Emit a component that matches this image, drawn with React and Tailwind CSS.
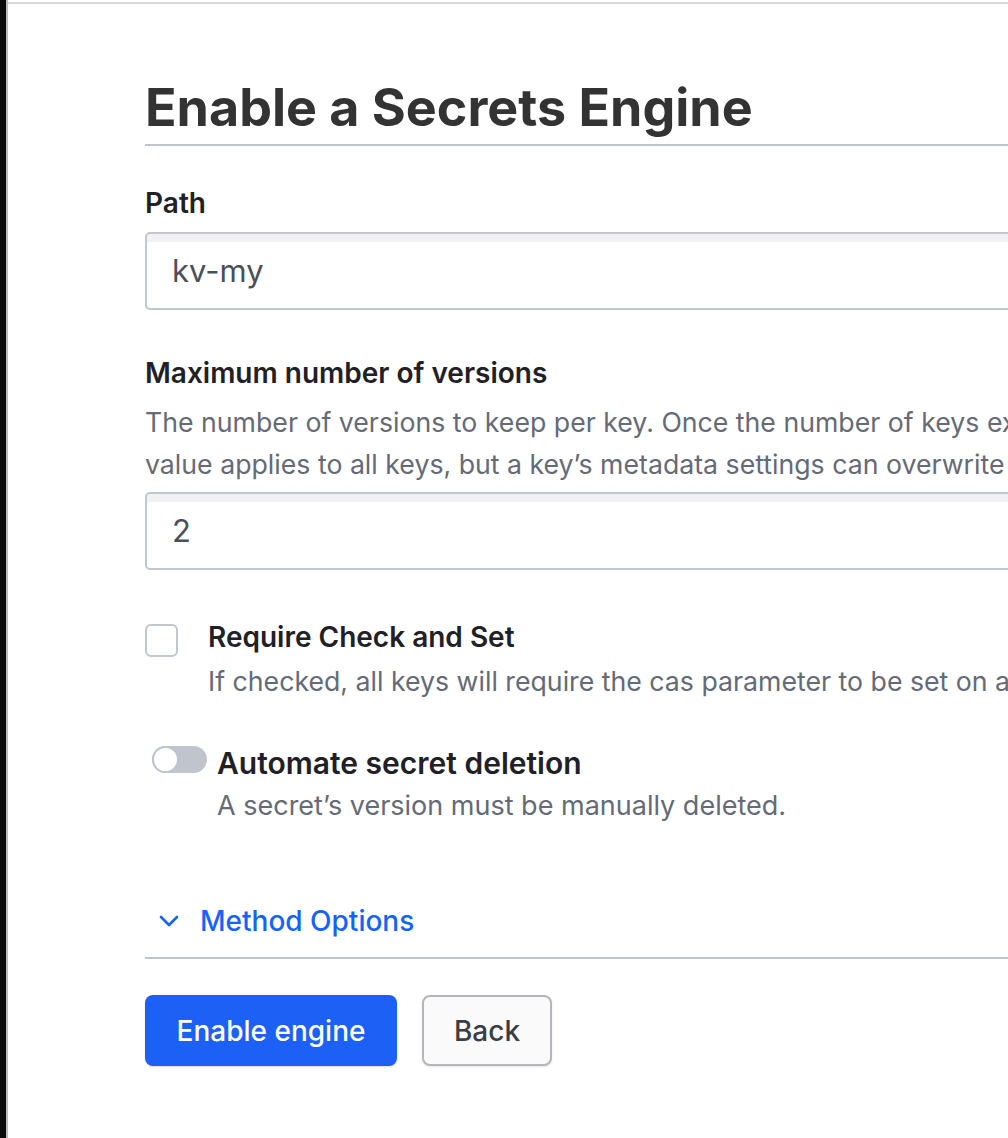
const font = { fontFamily: "Inter, 'Noto Sans', sans-serif" };

const TextInput = ({ value }) => (
  <div className="h-[78px] w-full rounded-[5px] border-2 border-[#c2c6ce] bg-white shadow-[inset_0_8px_0_#f1f1f3] flex items-center px-[25px]">
    <span className="text-[31px] text-[#4b4f57]">{value}</span>
  </div>
);

export default function App() {
  return (
    <div className="flex min-h-[1138px] w-[1008px] overflow-hidden bg-white" style={font}>
      {/* left window edge */}
      <div className="w-[6px] shrink-0 bg-[#0b0b0c]" />
      <div className="w-[2px] shrink-0 bg-[#bdbdbd]" />

      <div className="flex-1 flex flex-col">
        <div className="h-[2px] mt-[2px] bg-[#d6d6d6]" />

        <div className="pl-[137px] w-[1600px] pt-[74px]">
          <h1 className="text-[52px] leading-[60px] font-bold text-[#333333]">
            Enable a Secrets Engine
          </h1>
          <div className="mt-[6px] h-[2px] bg-[#bfc4cd]" />

          {/* Path */}
          <label className="mt-[41px] block text-[28px] leading-[32px] font-semibold text-[#1f2126]">Path</label>
          <div className="mt-[13px]">
            <TextInput value="kv-my" />
          </div>

          {/* Max versions */}
          <label className="mt-[47px] block text-[28px] leading-[32px] font-semibold text-[#1f2126]">
            Maximum number of versions
          </label>
          <p className="mt-[12px] text-[26.7px] leading-[42px] text-[#656a76] whitespace-nowrap">
            The number of versions to keep per key. Once the number of keys exceeds the maximum number set here, the oldest version will be permanently deleted. This
            <br />
            value applies to all keys, but a key’s metadata settings can overwrite this value.
          </p>
          <div className="mt-[7px]">
            <TextInput value="2" />
          </div>

          {/* Check and set */}
          <div className="mt-[50px] flex gap-[30px]">
            <div className="mt-[4px] h-[33px] w-[33px] shrink-0 rounded-[6px] border-2 border-[#c2c6ce] bg-white" />
            <div className="flex flex-col">
              <span className="text-[28px] leading-[34px] font-semibold text-[#1f2126]">Require Check and Set</span>
              <span className="mt-[10px] text-[26.7px] leading-[34px] text-[#656a76] whitespace-nowrap">
                If checked, all keys will require the cas parameter to be set on all write requests.
              </span>
            </div>
          </div>

          {/* Delete version after */}
          <div className="mt-[47px] flex gap-[10px] pl-[7px]">
            <div className="mt-[1px] relative h-[27px] w-[55px] shrink-0 rounded-full bg-[#bfc4cd]">
              <div className="absolute left-0 top-0 h-[27px] w-[27px] rounded-full border-2 border-[#bfc4cd] bg-white" />
            </div>
            <div className="flex flex-col">
              <span className="text-[30px] leading-[36px] font-semibold text-[#1f2126]">Automate secret deletion</span>
              <span className="mt-[8px] text-[27px] leading-[34px] text-[#656a76]">
                A secret’s version must be manually deleted.
              </span>
            </div>
          </div>

          {/* Method options */}
          <div className="mt-[81px] flex items-center gap-[20px] pl-[13px] text-[#1563ff]">
            <svg width="22" height="14" viewBox="0 0 22 14" fill="none">
              <polyline points="3,3 11,11 19,3" stroke="currentColor" strokeWidth="2.6" strokeLinecap="round" strokeLinejoin="round" />
            </svg>
            <span className="text-[28px] leading-[34px] font-medium">Method Options</span>
          </div>
          <div className="mt-[19px] h-[2px] bg-[#bfc4cd]" />

          <div className="mt-[36px] flex gap-[25px]">
            <button className="h-[71px] w-[252px] rounded-[8px] bg-[#1c60f6] text-[28px] font-medium text-white shadow-[0_1px_2px_rgba(0,0,0,0.15)]">
              Enable engine
            </button>
            <button className="h-[71px] w-[130px] rounded-[8px] border-2 border-[#b5b5ba] bg-[#fafafa] text-[28px] font-medium text-[#3b3d45] shadow-[0_1px_2px_rgba(0,0,0,0.1)]">
              Back
            </button>
          </div>
        </div>
      </div>
    </div>
  );
}
